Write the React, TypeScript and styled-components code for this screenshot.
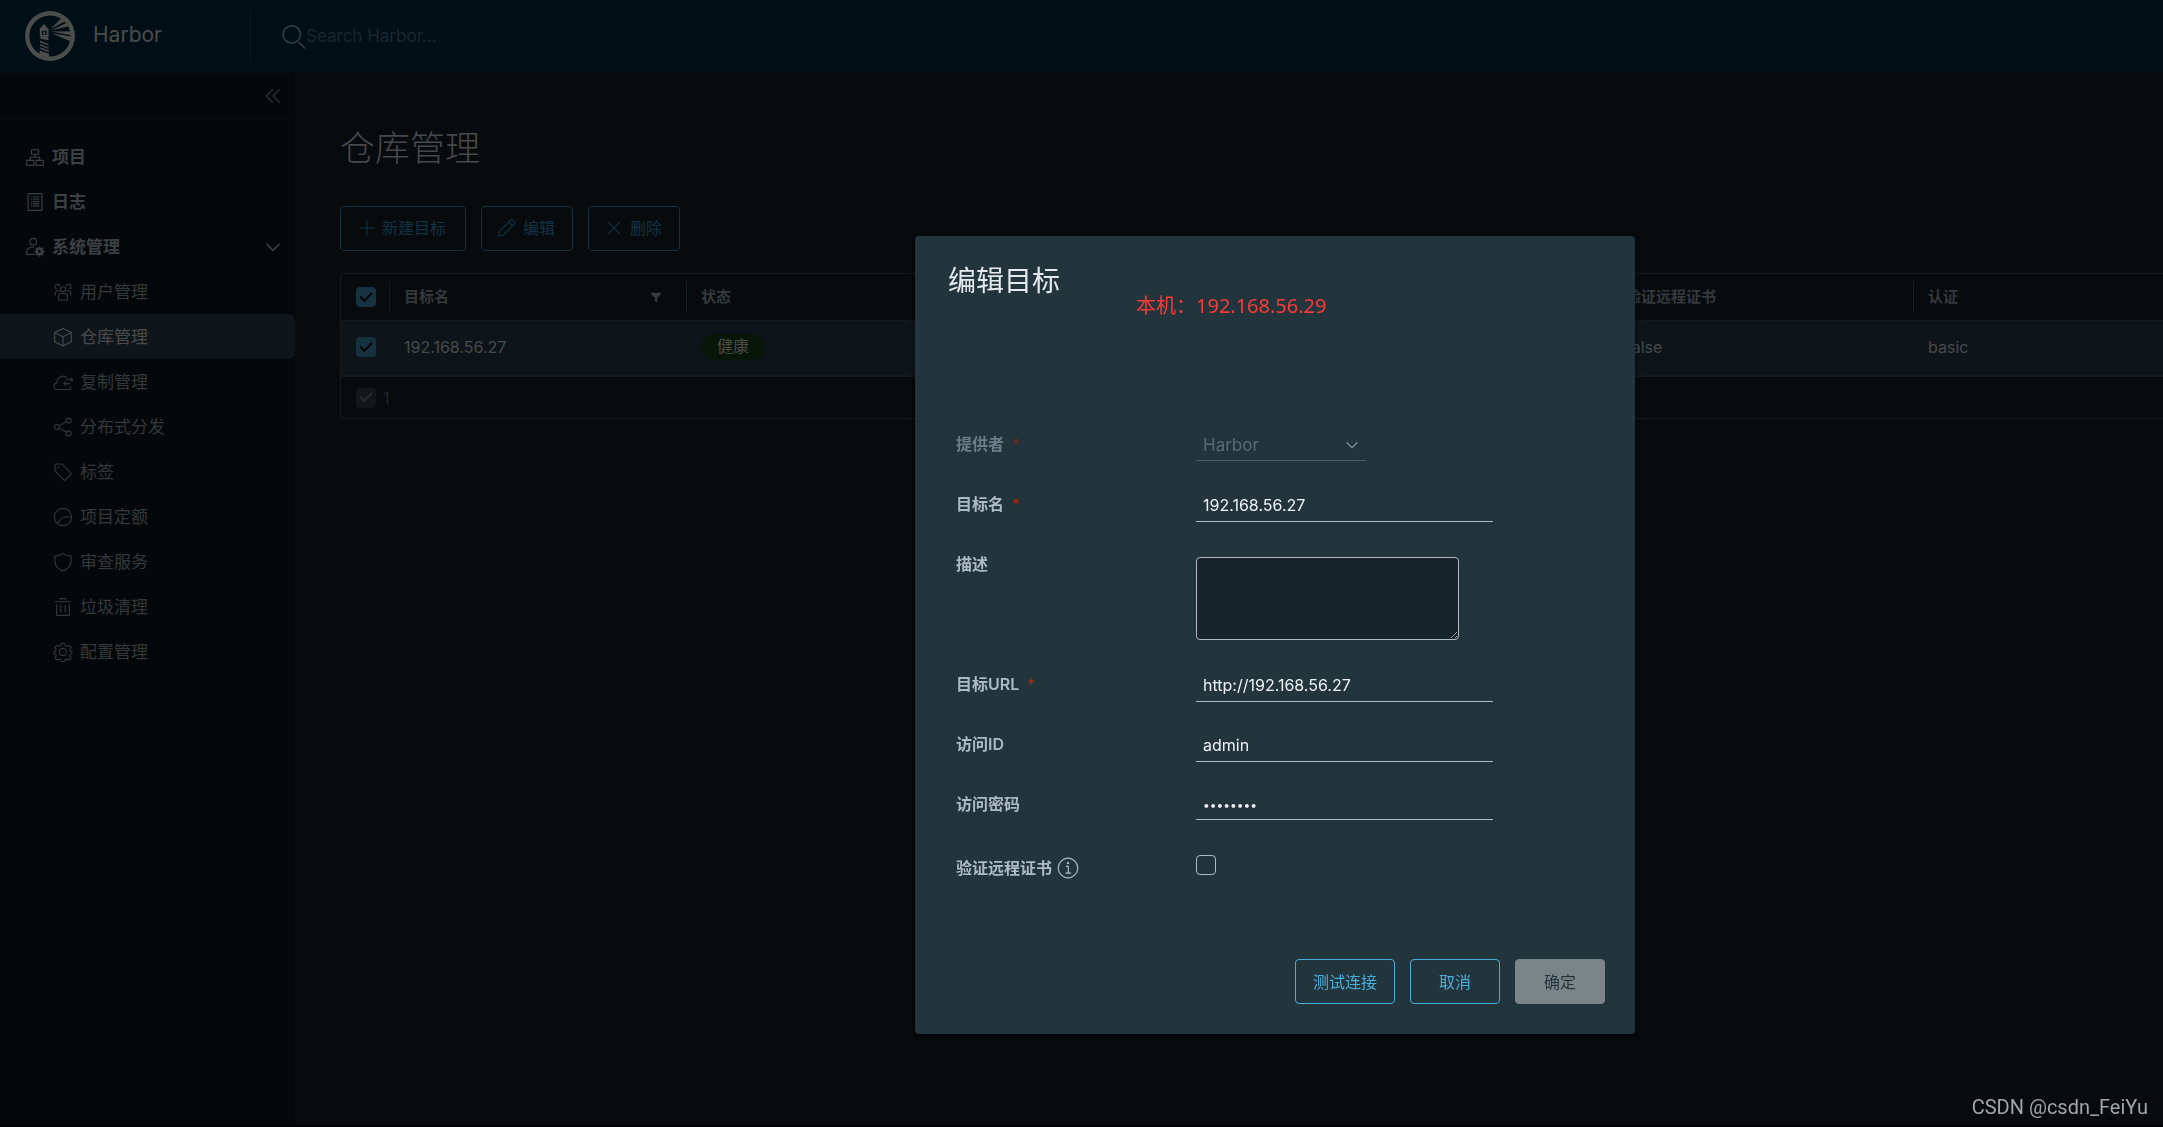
import React from "react";
import styled, { createGlobalStyle } from "styled-components";

const GlobalStyle = createGlobalStyle`
  *, *::before, *::after { box-sizing: border-box; }
  html { background: #000; }
  body {
    margin: 0;
    overflow: hidden;
    font-family: Inter, "Noto Sans CJK SC", sans-serif;
    font-size: 16px;
    color: #484a4b;
  }
  button, input, select, textarea { font: inherit; }
`;

const App = styled.div`
  display: flex;
  flex-direction: column;
  height: 100vh;
  border-bottom: 2px solid #000;
  background: #070b0e;
`;

const TopBar = styled.header`
  display: flex;
  align-items: center;
  flex: none;
  height: 73px;
  padding: 0 25px 1px;
  background: #000f16;
`;

const Brand = styled.a`
  display: flex;
  align-items: center;
  gap: 18px;
  width: 226px;
  height: 50px;
  border-right: 1px solid #0a1a21;
  color: #4b4c4c;
  font-size: 21px;
  line-height: 28px;
  text-decoration: none;
`;

const BrandName = styled.span`
  padding-bottom: 2px;
`;

const Search = styled.label`
  display: flex;
  align-items: center;
  flex: 1;
  padding-left: 30px;
  color: #3c4548;
`;

const SearchInput = styled.input`
  flex: 1;
  padding: 0;
  border: 0;
  outline: 0;
  background: transparent;
  color: #4b4c4c;
  font-size: 17px;
  line-height: 24px;
  &::placeholder { color: #1b282e; opacity: 1; }
`;

const Body = styled.div`
  display: flex;
  flex: 1;
  min-height: 0;
`;

const SideBar = styled.nav`
  flex: none;
  width: 295px;
  background: #04080b;
`;

const SideTop = styled.div`
  display: flex;
  align-items: center;
  justify-content: flex-end;
  height: 46px;
  padding-right: 12px;
  border-bottom: 1px solid #080d10;
`;

const CollapseButton = styled.button`
  display: flex;
  padding: 0;
  border: 0;
  background: none;
  color: #33393c;
`;

const Menu = styled.ul`
  margin: 0;
  padding: 15px 0 0;
  list-style: none;
`;

const MenuLink = styled.a<{ $level: 1 | 2; $active?: boolean }>`
  display: flex;
  align-items: center;
  gap: 7px;
  height: 45px;
  padding: 0 12px 0 ${(p) => (p.$level === 1 ? 25 : 53)}px;
  border-radius: 0 6px 6px 0;
  background: ${(p) => (p.$active ? "#0e161b" : "transparent")};
  color: ${(p) => (p.$active ? "#4a4b4b" : p.$level === 1 ? "#3b4042" : "#333839")};
  font-size: 17px;
  font-weight: ${(p) => (p.$level === 1 ? 700 : 400)};
  line-height: 24px;
  text-decoration: none;
`;

const MenuText = styled.span`
  flex: 1;
`;

const Main = styled.main`
  flex: 1;
  min-width: 0;
  padding: 49px 0 0 45px;
  overflow: hidden;
`;

const PageTitle = styled.h2`
  margin: 0;
  color: #474849;
  font-size: 35px;
  font-weight: 300;
  line-height: 52px;
`;

const Toolbar = styled.div`
  display: flex;
  gap: 15px;
  padding: 32px 0 22px;
`;

const ToolButton = styled.button<{ $wide?: boolean }>`
  display: flex;
  align-items: center;
  justify-content: center;
  gap: 6px;
  width: ${(p) => (p.$wide ? 126 : 92)}px;
  height: 45px;
  padding: 0 2px 2px 0;
  border: 1px solid #12303e;
  border-radius: 4px;
  background: transparent;
  color: #123342;
  font-size: 16px;
  line-height: 24px;
`;

const GridFrame = styled.div`
  width: calc(100% + 48px);
  border: 1px solid #14191b;
  border-radius: 4px;
`;

const Table = styled.table`
  width: 100%;
  table-layout: fixed;
  border-collapse: separate;
  border-spacing: 0;
  line-height: 22px;
`;

const HeadCell = styled.th<{ $width?: number }>`
  width: ${(p) => (p.$width ? `${p.$width}px` : "auto")};
  height: 47px;
  padding: 7px 0;
  border-bottom: 1px solid #14191b;
  color: #35393b;
  font-size: 15px;
  font-weight: 600;
  text-align: left;
`;

const HeadInner = styled.div<{ $divided?: boolean; $check?: boolean }>`
  display: flex;
  align-items: center;
  justify-content: space-between;
  height: 32px;
  padding: 0 24px 0 ${(p) => (p.$check ? 15 : 14)}px;
  border-right: 1px solid ${(p) => (p.$divided ? "#171c1e" : "transparent")};
`;

const Cell = styled.td<{ $check?: boolean }>`
  height: 56px;
  padding: 0 14px 2px ${(p) => (p.$check ? 15 : 14)}px;
  border-bottom: 2px solid #13191c;
  background: #0d151a;
  color: #484a4b;
`;

const GridFooter = styled.label`
  display: flex;
  align-items: center;
  gap: 7px;
  height: 41px;
  padding-left: 15px;
  color: #222628;
  line-height: 22px;
`;

const Badge = styled.span`
  display: inline-flex;
  align-items: center;
  height: 26px;
  padding: 0 16px 2px;
  border-radius: 13px;
  background: #08160a;
  color: #4a4d4b;
  font-size: 16px;
`;

type Tone = "selected" | "muted" | "open";
const boxFill: Record<Tone, string> = { selected: "#16323f", muted: "#141618", open: "transparent" };
const boxMark: Record<Tone, string> = { selected: "#020506", muted: "#2a2d2f", open: "#adbbc4" };

const Tick = styled.input<{ $tone: Tone }>`
  display: flex;
  align-items: center;
  justify-content: center;
  flex: none;
  width: 20px;
  height: 20px;
  margin: 0;
  appearance: none;
  border: ${(p) => (p.$tone === "open" ? "1px solid #adbbc4" : "0")};
  border-radius: 4px;
  background: ${(p) => boxFill[p.$tone]};
  &:checked::before {
    content: "";
    width: 12px;
    height: 7px;
    margin-bottom: 4px;
    border-left: 2px solid ${(p) => boxMark[p.$tone]};
    border-bottom: 2px solid ${(p) => boxMark[p.$tone]};
    transform: rotate(-45deg);
  }
`;

const Backdrop = styled.div`
  position: fixed;
  inset: 0;
  display: flex;
  align-items: flex-start;
  justify-content: center;
  padding: 236px 0 0 387px;
`;

const Dialog = styled.section`
  position: relative;
  width: 720px;
  padding: 24px 30px 30px;
  border-radius: 4px;
  background: #22343c;
  box-shadow: 0 1px 3px 3px rgba(0, 0, 0, 0.25);
`;

const DialogTitle = styled.h3`
  margin: 0;
  padding-left: 3px;
  color: #e3e9ec;
  font-size: 28px;
  font-weight: 400;
  line-height: 42px;
`;

const HostNote = styled.p`
  position: absolute;
  top: 55px;
  left: 221px;
  margin: 0;
  color: #fb3a37;
  font-family: "Noto Sans", "Noto Sans CJK SC", sans-serif;
  font-size: 20px;
  line-height: 30px;
`;

const Form = styled.form`
  padding-top: 112px;
`;

const Row = styled.div<{ $tall?: boolean; $offset?: boolean }>`
  display: flex;
  align-items: flex-start;
  min-height: ${(p) => (p.$tall ? 120 : 60)}px;
  padding: ${(p) => (p.$offset ? 4 : 0)}px 0 0 11px;
`;

const Label = styled.label<{ $disabled?: boolean }>`
  display: flex;
  align-items: center;
  gap: 5px;
  width: 240px;
  padding-top: 18px;
  color: #adbbc4;
  font-size: 16px;
  font-weight: 600;
  line-height: 24px;
  opacity: ${(p) => (p.$disabled ? 0.54 : 1)};
`;

const Required = styled.span`
  padding-left: 3px;
  color: #b52508;
  font-weight: 400;
`;

const Control = styled.div`
  position: relative;
  padding-top: 13px;
`;

const TextInput = styled.input`
  display: block;
  width: 297px;
  height: ${(p) => (p.type === "password" ? 33 : 35)}px;
  padding: 2px 7px 0;
  border: 0;
  border-bottom: 1px solid #adbbc4;
  outline: 0;
  background: transparent;
  color: #eef2f4;
  font-size: ${(p) => (p.type === "password" ? 12 : 16)}px;
`;

const SelectInput = styled.select`
  display: block;
  width: 170px;
  height: 34px;
  padding: 2px 7px 0;
  appearance: none;
  border: 0;
  border-bottom: 1px solid #4a5c65;
  border-radius: 0;
  background: transparent;
  color: #5c6b73;
  font-size: 17px;
  opacity: 1;
`;

const SelectArrow = styled.span`
  position: absolute;
  top: 23px;
  right: 6px;
  display: flex;
  color: #7d8c94;
  pointer-events: none;
`;

const TextArea = styled.textarea`
  display: block;
  width: 263px;
  height: 83px;
  margin-top: 10px;
  border: 1px solid #adbbc4;
  border-radius: 4px;
  outline: 0;
  background: #17242b;
  color: #eef2f4;
  color-scheme: dark;
`;

const CheckControl = styled.div`
  padding-top: 17px;
`;

const Actions = styled.footer`
  display: flex;
  justify-content: flex-end;
  gap: 15px;
  padding-top: 65px;
`;

const ActionButton = styled.button<{ $wide?: boolean }>`
  width: ${(p) => (p.$wide ? 100 : 90)}px;
  height: 45px;
  padding: 0 0 2px;
  border: 1px solid #49afd9;
  border-radius: 4px;
  background: transparent;
  color: #49afd9;
  font-size: 16px;
  &:disabled {
    border-color: #7a858a;
    background: #7a858a;
    color: #26363e;
  }
`;

const Watermark = styled.small`
  position: fixed;
  right: 15px;
  bottom: 7px;
  color: #a3a5a6;
  font-family: Roboto, sans-serif;
  font-size: 20px;
  line-height: 26px;
`;

const Icon = ({ children, size = 20, stroke = 2 }: { children: React.ReactNode; size?: number; stroke?: number }) => (
  <svg
    width={size}
    height={size}
    viewBox="0 0 36 36"
    fill="none"
    stroke="currentColor"
    strokeWidth={stroke}
    strokeLinejoin="round"
    aria-hidden="true"
    style={{ flex: "none" }}
  >
    {children}
  </svg>
);

const Logo = () => (
  <svg width="50" height="50" viewBox="0 0 50 50" fill="#4b4c4c" aria-hidden="true">
    <path fillRule="evenodd" d="M25 0a25 25 0 1 0 0 50a25 25 0 0 0 0-50ZM25 4.4a20.6 20.6 0 1 1 0 41.2a20.6 20.6 0 0 1 0-41.2Z" />
    <path d="M19 13l4.8 5.2h-9.6ZM14.8 18.2h8.8v7.4h-8.8Z" />
    <path fill="#000f16" d="M16.8 19.8h4.8v4.2h-4.8Z" />
    <path d="M18.4 20.8h1.6v3.2h-1.6Z" />
    <path d="M15.4 25.6h8v3.6l-8-1.4ZM15 29.8l8.6 3.2v1.6L15 31.4ZM15 33l8.6 3.4v1.6L15 34.6ZM14.8 36.2l9 3.4v1.6l-9-3.4ZM14.6 39.4l9.4 3.4v5h-10Z" />
    <path d="M25.6 18L37 6.500l4.500 3ZM26 19.400l15.600-7.600 2 3.400ZM26.400 20.600l20-.4v4ZM26.400 22.200l20 3.400-1.600 4.400Z" />
  </svg>
);

const icons = {
  search: (
    <>
      <circle cx="15.5" cy="15" r="12.5" />
      <path d="M26 26.5l8 8" strokeLinecap="round" />
    </>
  ),
  collapse: <path d="M17.500 6.500L6 18l11.500 11.500M29.500 6.500L18 18l11.500 11.500" strokeLinecap="round" />,
  caret: <path d="M7 13l11 11 11-11" strokeLinecap="round" />,
  projects: <path d="M11.500 5h13v8h-13ZM3 24h13v9H3ZM20 24h13v9H20ZM18 13v5.500M9.500 24v-5.500h17V24" />,
  logs: (
    <>
      <rect x="5.500" y="3" width="25" height="30" rx="1" />
      <path d="M10.500 9h2M14 9h11.500M10.500 13h2M14 13h11.500M10.500 17h2M14 17h11.500M10.500 21h2M14 21h11.500M10.500 25h2M14 25h11.500" />
    </>
  ),
  admin: (
    <>
      <circle cx="15" cy="8.500" r="6" />
      <path d="M17 31.500H3V26c1-4.500 6-8 12.500-8" strokeLinecap="round" />
      <circle cx="26" cy="26" r="4.500" strokeWidth="4" />
      <path
        d="M26 17v3.500M26 31.500V35M17 26h3.500M31.500 26H35M19.600 19.600l2.500 2.500M29.900 29.900l2.500 2.500M32.400 19.600l-2.500 2.500M22.100 29.900l-2.500 2.500"
        strokeWidth="3.500"
      />
    </>
  ),
  users: (
    <>
      <circle cx="18" cy="13" r="4.500" />
      <path d="M10 32.500V23.500c2-4 14-4 16 0v9ZM12 8.500a4.200 4.200 0 1 0-5 4M24 8.500a4.200 4.200 0 1 1 5 4M4 24.500V18.500c1.500-2.500 4-3.200 8-3M32 24.500V18.500c-1.500-2.500-4-3.200-8-3" />
    </>
  ),
  cube: <path d="M18 2.500L33 10v16.500L18 34 3 26.500V10ZM3 10l15 7.500L33 10M18 17.500V34" />,
  cloud: (
    <path d="M31 26c2 3 0 5.500-4 5.500H8c-8 0-9-10.500-1-12C7 8 20 4 25 11.500M35.500 14H24M32 10.500l3.500 3.500-3.500 3.500M31 21H19.500M23 17.500L19.500 21l3.500 3.500" />
  ),
  share: (
    <>
      <circle cx="7" cy="18" r="4.500" />
      <circle cx="28" cy="6.500" r="4.500" />
      <circle cx="28" cy="29.500" r="4.500" />
      <path d="M11 16l13-7.300M11 20l13 7.300" />
    </>
  ),
  tag: (
    <>
      <path d="M3.500 5.500a2 2 0 0 1 2-2H16L32.500 20a2 2 0 0 1 0 2L22 32.500a2 2 0 0 1-2 0L3.500 16Z" />
      <circle cx="10" cy="9.500" r="1.500" fill="currentColor" stroke="none" />
    </>
  ),
  quota: (
    <>
      <circle cx="18" cy="18" r="15.500" />
      <path d="M33 18H18L8 29.500" />
    </>
  ),
  shield: <path d="M18 2.500c4 3.500 9 4.800 14.500 5v9C32.500 25 26 31 18 34 10 31 3.500 25 3.500 16.500v-9c5.500-.2 10.500-1.500 14.500-5Z" />,
  trash: <path d="M3 8.500h30M13 5V3h10v2M6.500 13v20h23V13M14 14v14M22 14v14" />,
  cog: (
    <>
      <circle cx="18" cy="18" r="6.500" />
      <path d="M15 2.500h6l1.200 4.700 2.400 1 4.200-2.500 4 4-2.400 4.300 1 2.300 2.600 1.700v3l-3.400 2-.4 2 2.200 4-4.200 3.800-4-2.300-2.400 1-1 3.500h-5.600l-1-3.500-2.400-1-4 2.300L3.600 29l2.200-4-.4-2L2 21v-3l2.600-1.700 1-2.300-2.400-4.300 4-4 4.200 2.500 2.400-1Z" />
    </>
  ),
  plus: <path d="M18 3v30M3 18h30" />,
  pencil: <path d="M3 33l1.500-9L25 3.500c2-2 9 4.500 7 7L11.500 31ZM21 7.500l7.500 7.500" />,
  close: <path d="M8 8l20 20M28 8L8 28" strokeLinecap="round" />,
  funnel: <path d="M2 5h32v3L22 20v15l-8-5V20L2 8Z" fill="currentColor" stroke="none" />,
  info: (
    <>
      <circle cx="18" cy="18" r="16" />
      <path d="M14.500 15.500h4V26M14 26.500h9" />
      <circle cx="18" cy="10" r="2" fill="currentColor" stroke="none" />
    </>
  ),
};

const adminItems: { icon: keyof typeof icons; text: string; active?: boolean }[] = [
  { icon: "users", text: "用户管理" },
  { icon: "cube", text: "仓库管理", active: true },
  { icon: "cloud", text: "复制管理" },
  { icon: "share", text: "分布式分发" },
  { icon: "tag", text: "标签" },
  { icon: "quota", text: "项目定额" },
  { icon: "shield", text: "审查服务" },
  { icon: "trash", text: "垃圾清理" },
  { icon: "cog", text: "配置管理" },
];

const Navigation = () => (
  <SideBar>
    <SideTop>
      <CollapseButton type="button">
        <Icon>{icons.collapse}</Icon>
      </CollapseButton>
    </SideTop>
    <Menu>
      <li>
        <MenuLink href="#projects" $level={1}>
          <Icon>{icons.projects}</Icon>
          <MenuText>项目</MenuText>
        </MenuLink>
      </li>
      <li>
        <MenuLink href="#logs" $level={1}>
          <Icon>{icons.logs}</Icon>
          <MenuText>日志</MenuText>
        </MenuLink>
      </li>
      <li>
        <MenuLink href="#admin" $level={1}>
          <Icon>{icons.admin}</Icon>
          <MenuText>系统管理</MenuText>
          <Icon stroke={3}>{icons.caret}</Icon>
        </MenuLink>
      </li>
      {adminItems.map((item) => (
        <li key={item.text}>
          <MenuLink href={`#${item.icon}`} $level={2} $active={item.active}>
            <Icon>{icons[item.icon]}</Icon>
            <MenuText>{item.text}</MenuText>
          </MenuLink>
        </li>
      ))}
    </Menu>
  </SideBar>
);

const Registries = () => (
  <Main>
    <PageTitle>仓库管理</PageTitle>
    <Toolbar>
      <ToolButton type="button" $wide>
        <Icon size={18}>{icons.plus}</Icon>新建目标
      </ToolButton>
      <ToolButton type="button">
        <Icon>{icons.pencil}</Icon>编辑
      </ToolButton>
      <ToolButton type="button">
        <Icon>{icons.close}</Icon>删除
      </ToolButton>
    </Toolbar>
    <GridFrame>
      <Table>
        <thead>
          <tr>
            <HeadCell $width={49}>
              <HeadInner $check $divided>
                <Tick type="checkbox" $tone="selected" defaultChecked />
              </HeadInner>
            </HeadCell>
            <HeadCell $width={297}>
              <HeadInner $divided>
                目标名<Icon size={12}>{icons.funnel}</Icon>
              </HeadInner>
            </HeadCell>
            <HeadCell>
              <HeadInner $divided>状态</HeadInner>
            </HeadCell>
            <HeadCell $width={302}>
              <HeadInner $divided>验证远程证书</HeadInner>
            </HeadCell>
            <HeadCell $width={296}>
              <HeadInner>
                认证<Icon size={12}>{icons.funnel}</Icon>
              </HeadInner>
            </HeadCell>
          </tr>
        </thead>
        <tbody>
          <tr>
            <Cell $check>
              <Tick type="checkbox" $tone="selected" defaultChecked />
            </Cell>
            <Cell>192.168.56.27</Cell>
            <Cell>
              <Badge>健康</Badge>
            </Cell>
            <Cell>false</Cell>
            <Cell>basic</Cell>
          </tr>
        </tbody>
      </Table>
      <GridFooter>
        <Tick type="checkbox" $tone="muted" defaultChecked disabled />1
      </GridFooter>
    </GridFrame>
  </Main>
);

const EditDialog = () => (
  <Backdrop>
    <Dialog role="dialog" aria-labelledby="dialog-title">
      <DialogTitle id="dialog-title">编辑目标</DialogTitle>
      <HostNote>本机：192.168.56.29</HostNote>
      <Form onSubmit={(e) => e.preventDefault()}>
        <Row>
          <Label htmlFor="provider" $disabled>
            提供者<Required>*</Required>
          </Label>
          <Control>
            <SelectInput id="provider" disabled>
              <option>Harbor</option>
            </SelectInput>
            <SelectArrow>
              <Icon size={16} stroke={3}>{icons.caret}</Icon>
            </SelectArrow>
          </Control>
        </Row>
        <Row>
          <Label htmlFor="name">
            目标名<Required>*</Required>
          </Label>
          <Control>
            <TextInput id="name" type="text" defaultValue="192.168.56.27" />
          </Control>
        </Row>
        <Row $tall>
          <Label htmlFor="description">描述</Label>
          <Control>
            <TextArea id="description" />
          </Control>
        </Row>
        <Row>
          <Label htmlFor="url">
            目标URL<Required>*</Required>
          </Label>
          <Control>
            <TextInput id="url" type="text" defaultValue="http://192.168.56.27" />
          </Control>
        </Row>
        <Row>
          <Label htmlFor="access-id">访问ID</Label>
          <Control>
            <TextInput id="access-id" type="text" defaultValue="admin" />
          </Control>
        </Row>
        <Row>
          <Label htmlFor="secret">访问密码</Label>
          <Control>
            <TextInput id="secret" type="password" defaultValue="password" />
          </Control>
        </Row>
        <Row $offset>
          <Label htmlFor="verify">
            验证远程证书<Icon size={22}>{icons.info}</Icon>
          </Label>
          <CheckControl>
            <Tick id="verify" type="checkbox" $tone="open" />
          </CheckControl>
        </Row>
        <Actions>
          <ActionButton type="button" $wide>测试连接</ActionButton>
          <ActionButton type="button">取消</ActionButton>
          <ActionButton type="submit" disabled>确定</ActionButton>
        </Actions>
      </Form>
    </Dialog>
  </Backdrop>
);

export default function HarborApp() {
  return (
    <>
      <GlobalStyle />
      <App>
        <TopBar>
          <Brand href="#home">
            <Logo />
            <BrandName>Harbor</BrandName>
          </Brand>
          <Search>
            <Icon size={25}>{icons.search}</Icon>
            <SearchInput type="text" placeholder="Search Harbor..." />
          </Search>
        </TopBar>
        <Body>
          <Navigation />
          <Registries />
        </Body>
      </App>
      <EditDialog />
      <Watermark>CSDN @csdn_FeiYu</Watermark>
    </>
  );
}
